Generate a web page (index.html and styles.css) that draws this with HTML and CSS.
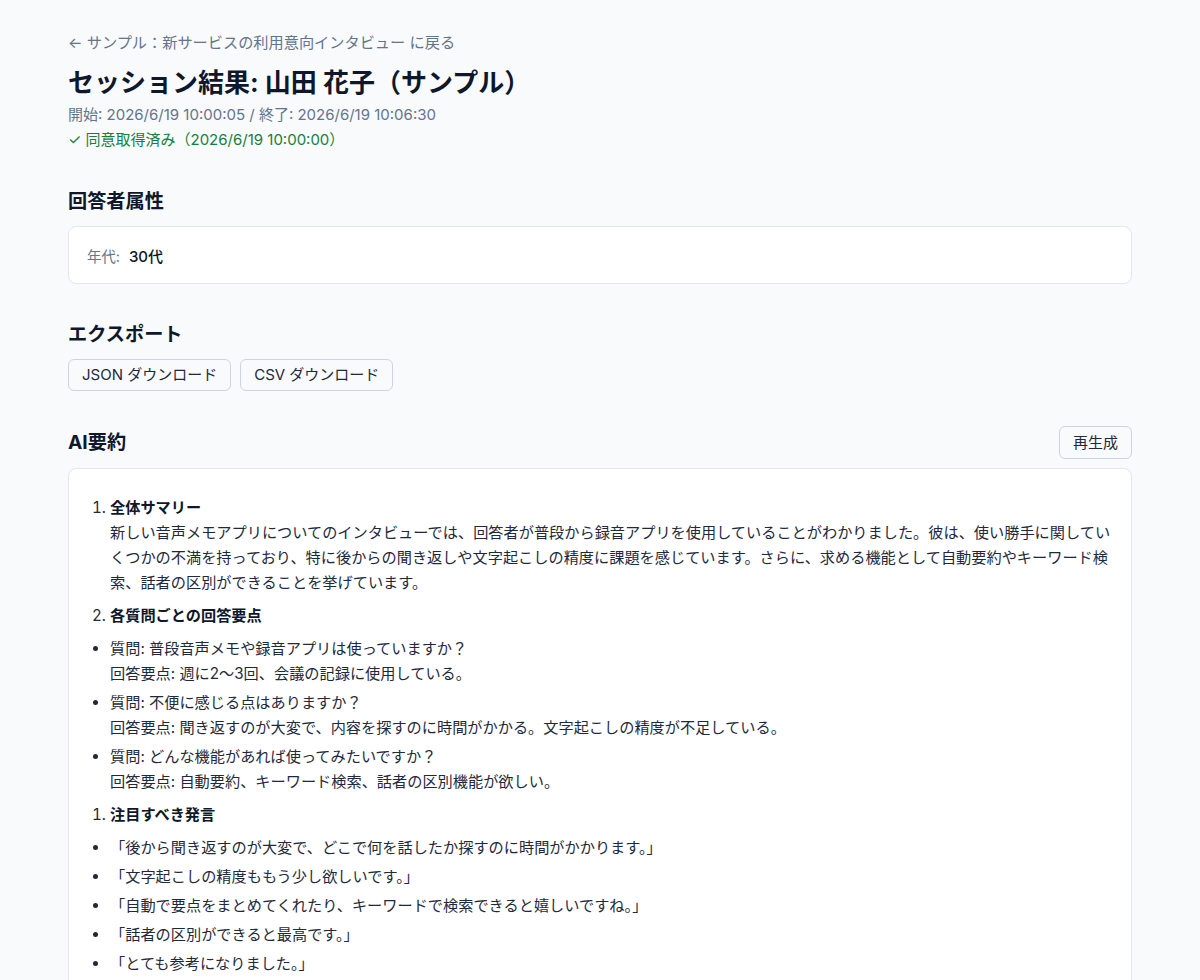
FILE: index.html
```html
<!DOCTYPE html>
<html lang="ja">
<head>
<meta charset="utf-8">
<title>セッション結果</title>
<link rel="stylesheet" href="styles.css">
</head>
<body>
<main class="page">
  <a class="back" href="#">← サンプル：新サービスの利用意向インタビュー に戻る</a>
  <h1 class="title">セッション結果: 山田 花子（サンプル）</h1>
  <p class="meta">開始: 2026/6/19 10:00:05 / 終了: 2026/6/19 10:06:30</p>
  <p class="consent">✓ 同意取得済み（2026/6/19 10:00:00）</p>

  <section class="section">
    <h2 class="section-title">回答者属性</h2>
    <div class="card attr-card">
      <span class="attr-label">年代:</span>
      <span class="attr-value">30代</span>
    </div>
  </section>

  <section class="section">
    <h2 class="section-title">エクスポート</h2>
    <div class="btn-row">
      <button class="btn">JSON ダウンロード</button>
      <button class="btn">CSV ダウンロード</button>
    </div>
  </section>

  <section class="section section-ai">
    <div class="section-head">
      <h2 class="section-title">AI要約</h2>
      <button class="btn">再生成</button>
    </div>
    <div class="card summary">
      <ol>
        <li><strong>全体サマリー</strong><br>新しい音声メモアプリについてのインタビューでは、回答者が普段から録音アプリを使用していることがわかりました。彼は、使い勝手に関していくつかの不満を持っており、特に後からの聞き返しや文字起こしの精度に課題を感じています。さらに、求める機能として自動要約やキーワード検索、話者の区別ができることを挙げています。</li>
        <li><strong>各質問ごとの回答要点</strong></li>
      </ol>
      <ul>
        <li>質問: 普段音声メモや録音アプリは使っていますか？<br>回答要点: 週に2〜3回、会議の記録に使用している。</li>
        <li>質問: 不便に感じる点はありますか？<br>回答要点: 聞き返すのが大変で、内容を探すのに時間がかかる。文字起こしの精度が不足している。</li>
        <li>質問: どんな機能があれば使ってみたいですか？<br>回答要点: 自動要約、キーワード検索、話者の区別機能が欲しい。</li>
      </ul>
      <ol>
        <li><strong>注目すべき発言</strong></li>
      </ol>
      <ul>
        <li>「後から聞き返すのが大変で、どこで何を話したか探すのに時間がかかります。」</li>
        <li>「文字起こしの精度ももう少し欲しいです。」</li>
        <li>「自動で要点をまとめてくれたり、キーワードで検索できると嬉しいですね。」</li>
        <li>「話者の区別ができると最高です。」</li>
        <li>「とても参考になりました。」</li>
      </ul>
    </div>
  </section>
</main>
</body>
</html>
```

FILE: styles.css
```css
* { box-sizing: border-box; }

html, body {
  margin: 0;
  padding: 0;
  background: #f8fafc;
}

body {
  font-family: "Inter", "Noto Sans CJK JP", sans-serif;
  color: #0f172a;
}

.page {
  max-width: 1064px;
  margin: 0 auto;
  padding: 32px 0 40px;
}

.back {
  display: block;
  font-size: 15.2px;
  line-height: 22px;
  color: #64748b;
  text-decoration: none;
}

.title {
  margin: 12px 0 0;
  font-size: 26px;
  line-height: 33px;
  font-weight: 700;
  color: #0f172a;
}

.meta {
  margin: 5px 0 0;
  font-size: 15px;
  line-height: 22px;
  color: #64748b;
}

.consent {
  margin: 3px 0 0;
  font-size: 15px;
  line-height: 22px;
  color: #15803d;
}

.section {
  margin-top: 37px;
}

.section-ai {
  margin-top: 35px;
}

.section-title {
  margin: 0 0 11px;
  font-size: 19.2px;
  line-height: 27px;
  font-weight: 700;
  color: #0f172a;
}

.section-head {
  display: flex;
  align-items: center;
  justify-content: space-between;
  margin-bottom: 9px;
}

.section-head .section-title {
  margin: 0;
}

.card {
  background: #ffffff;
  border: 1px solid #e2e8f0;
  border-radius: 8px;
}

.attr-card {
  display: flex;
  align-items: center;
  gap: 9px;
  height: 58px;
  padding: 0 18px;
}

.attr-label {
  font-size: 14.4px;
  color: #64748b;
}

.attr-value {
  font-size: 15px;
  font-weight: 500;
  color: #0f172a;
}

.btn-row {
  display: flex;
  gap: 9px;
}

.btn {
  font-family: inherit;
  font-size: 15px;
  line-height: 20px;
  color: #1e293b;
  background: #f8fafc;
  border: 1px solid #cbd5e1;
  border-radius: 6px;
  padding: 5px 13px;
  height: 33px;
  cursor: pointer;
}

.btn-row .btn {
  height: 32px;
}

.summary {
  padding: 20px;
  font-size: 15.2px;
  line-height: 25px;
  color: #1e293b;
  min-height: 600px;
}

.summary ol,
.summary ul {
  margin: 8px 0;
  padding-left: 21px;
}

.summary > :first-child {
  margin-top: 6px;
}

.summary ol li + li {
  margin-top: 8px;
}

.summary ul li + li {
  margin-top: 4px;
}

.summary strong {
  font-weight: 700;
  color: #0f172a;
}
```
